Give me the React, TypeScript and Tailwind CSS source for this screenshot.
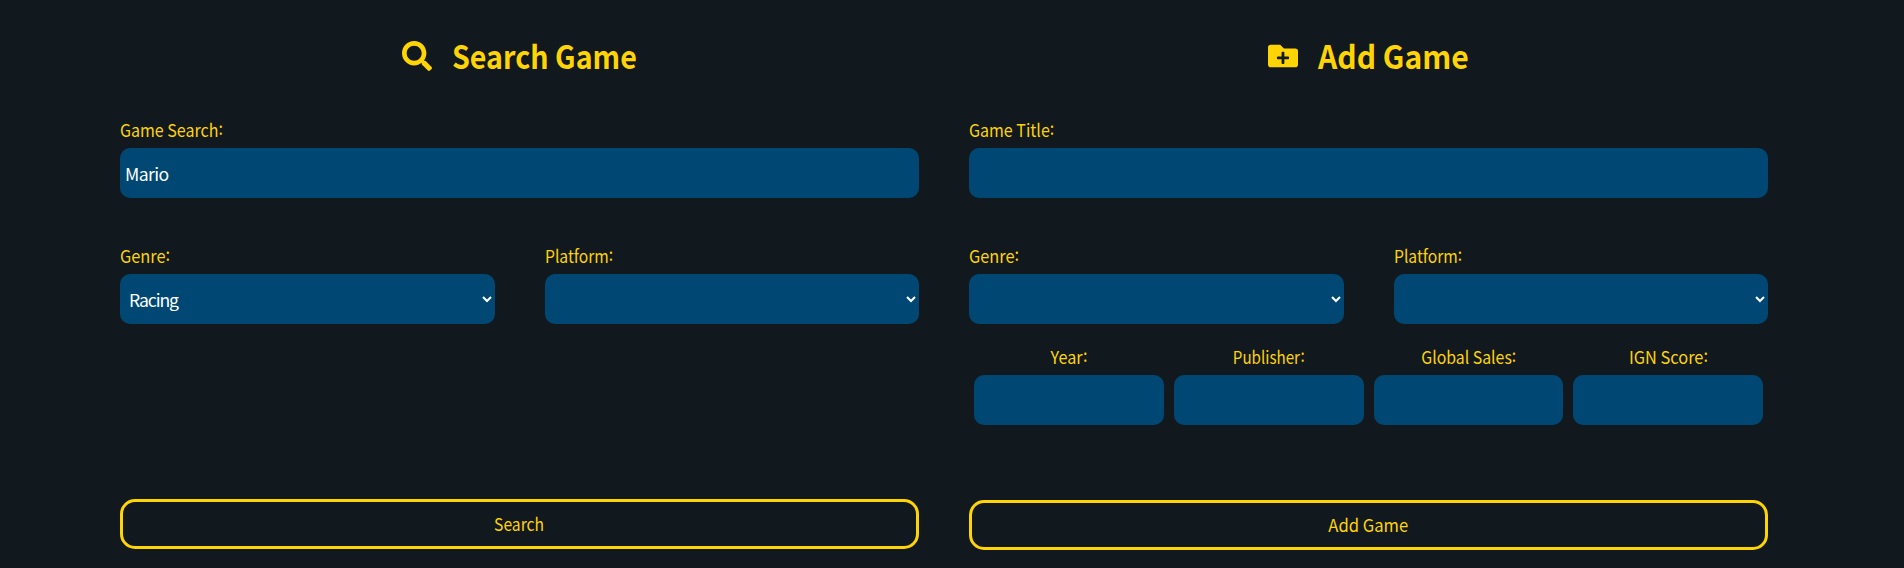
import { FaSearch, FaFolderPlus } from "react-icons/fa";
import type { ReactNode } from "react";

const field =
  "block h-[50px] w-full rounded-[10px] border-0 bg-[#004873] text-[17.6px] text-white outline-none";

function Label({ text, tight = "scale-x-[0.9]", center }: { text: string; tight?: string; center?: boolean }) {
  return (
    <span className={`block h-[30px] leading-[24px] ${center ? "text-center" : ""}`}>
      <span className={`inline-block ${tight} ${center ? "origin-center" : "origin-left"}`}>
        {text}
        <span className="relative -top-[2px]">:</span>
      </span>
    </span>
  );
}

type FieldProps = { label: string; tight?: string; value?: string; center?: boolean };

function TextField({ label, tight, value, center }: FieldProps) {
  return (
    <label className="block min-w-0 flex-1">
      <Label text={label} tight={tight} center={center} />
      <input className={`${field} pl-[5px] tracking-[-0.6px]`} defaultValue={value} />
    </label>
  );
}

function SelectField({ label, tight, value = "" }: FieldProps) {
  return (
    <label className="block min-w-0 flex-1">
      <Label text={label} tight={tight} />
      <select className={`${field} pl-[5px] tracking-[-1.1px]`} defaultValue={value}>
        <option value={value}>{value}</option>
      </select>
    </label>
  );
}

function Heading({ icon, children }: { icon: ReactNode; children: ReactNode }) {
  return (
    <h2 className="flex h-[118px] items-start justify-center gap-[20px] pt-[35px] text-[32px] font-bold leading-[40px]">
      {icon}
      {children}
    </h2>
  );
}

const button = "h-[50px] w-full rounded-[15px] border-[3px] border-[#ffd405] text-[17.6px]";

export default function App() {
  return (
    <main className="flex h-[568px] gap-[50px] overflow-hidden bg-[#11191f] pl-[120px] pr-[136px] font-['Noto_Sans_CJK_KR',sans-serif] text-[17.6px] text-[#ffd405]">
      <section className="min-w-0 flex-1">
        <Heading icon={<FaSearch className="mt-[6px] size-[30px]" />}>
          <span className="-mr-[22px] origin-left scale-x-[0.895]">Search Game</span>
        </Heading>
        <TextField label="Game Search" tight="scale-x-[0.91]" value="Mario" />
        <div className="mt-[46px] flex gap-[50px]">
          <SelectField label="Genre" tight="scale-x-[0.93]" value="Racing" />
          <SelectField label="Platform" tight="scale-x-[0.89]" />
        </div>
        <button className={`${button} mt-[175px]`}>
          <span className="inline-block scale-x-[0.89]">Search</span>
        </button>
      </section>
      <section className="min-w-0 flex-1">
        <Heading icon={<FaFolderPlus className="mt-[6px] size-[30px]" />}>
          <span className="-mr-[10px] origin-left scale-x-[0.94]">Add Game</span>
        </Heading>
        <TextField label="Game Title" tight="scale-x-[0.91]" />
        <div className="mt-[46px] flex gap-[50px]">
          <SelectField label="Genre" tight="scale-x-[0.93]" />
          <SelectField label="Platform" tight="scale-x-[0.89]" />
        </div>
        <div className="mt-[21px] flex gap-[10px] px-[5px]">
          <TextField label="Year" tight="scale-x-[0.92]" center />
          <TextField label="Publisher" tight="scale-x-[0.86]" center />
          <TextField label="Global Sales" center />
          <TextField label="IGN Score" tight="scale-x-[0.93]" center />
        </div>
        <button className={`${button} mt-[75px]`}>
          <span className="inline-block scale-x-[0.945]">Add Game</span>
        </button>
      </section>
    </main>
  );
}
